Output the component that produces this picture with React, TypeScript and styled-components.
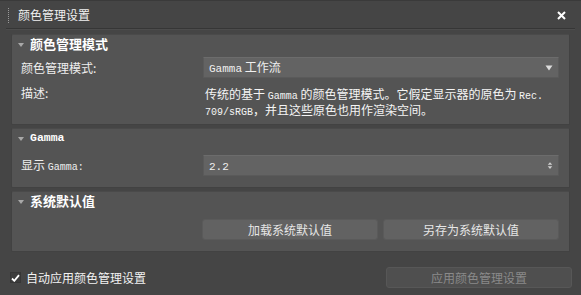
import React from 'react';
import styled, { createGlobalStyle } from 'styled-components';

const GlobalStyle = createGlobalStyle`
  html, body {
    margin: 0;
    padding: 0;
    background: #454545;
  }
  body {
    font-family: "Noto Sans CJK SC", "Liberation Sans", sans-serif;
    font-size: 12px;
    color: #f2f2f2;
  }
`;

const Window = styled.div`
  width: 581px;
  height: 295px;
  box-sizing: border-box;
  display: flex;
  flex-direction: column;
  background: #454545;
  border-top: 1px solid #3a3a3a;
  overflow: hidden;
`;

const TitleBar = styled.div`
  height: 27px;
  margin: 0 6px 0 6px;
  display: flex;
  align-items: center;
  border-bottom: 1px solid #363636;
  box-shadow: 0 1px 0 #4c4c4c;
`;

const Grip = styled.div`
  width: 0;
  height: 15px;
  margin: 1px 9px 0 2px;
  border-left: 1px dotted #9a9a9a;
`;

const Title = styled.div`
  flex: 1;
  font-size: 12px;
  line-height: 14px;
  color: #f0f0f0;
`;

const Close = styled.svg`
  width: 9px;
  height: 9px;
  margin: 1px 9px 0 0;
`;

const Content = styled.div`
  display: flex;
  flex-direction: column;
  gap: 3px;
  padding: 5px 11px 0 11px;
`;

const Panel = styled.section<{ $height: number }>`
  height: ${p => p.$height}px;
  box-sizing: border-box;
  background: #545454;
  border: 1px solid #424242;
  border-top-color: #4a4a4a;
  border-radius: 2px;
`;

const PanelHeader = styled.div`
  height: 18px;
  display: flex;
  align-items: center;
  padding-left: 6px;
  gap: 6px;
`;

const Caret = styled.span`
  width: 0;
  height: 0;
  border-left: 3.5px solid transparent;
  border-right: 3.5px solid transparent;
  border-top: 4px solid #a8a8a8;
  margin-top: 1px;
`;

const HeaderText = styled.span<{ $latin?: boolean }>`
  font-weight: 700;
  font-size: ${p => (p.$latin ? '11.5px' : '13px')};
  font-family: ${p =>
    p.$latin ? '"Liberation Mono", monospace' : '"Noto Sans CJK SC", sans-serif'};
  color: #ffffff;
  line-height: 14px;
`;

const Grid = styled.div<{ $top: number }>`
  display: grid;
  grid-template-columns: 182px 1fr;
  column-gap: 0;
  row-gap: 8px;
  padding: ${p => p.$top}px 10px 0 9px;
  align-items: center;
`;

const Label = styled.div<{ $alignTop?: boolean }>`
  font-size: 12px;
  line-height: 13px;
  color: #efefef;
  align-self: ${p => (p.$alignTop ? 'start' : 'center')};
`;

const Latin = styled.span<{ $size?: number }>`
  font-family: "Liberation Mono", "DejaVu Sans Mono", monospace;
  font-size: ${p => p.$size ?? 10}px;
`;

const Select = styled.div`
  height: 21px;
  box-sizing: border-box;
  display: flex;
  align-items: center;
  justify-content: space-between;
  padding: 0 5px 0 5px;
  background: #636363;
  border: 1px solid #5a5a5a;
  border-top-color: #6c6c6c;
  border-radius: 1px;
  color: #f0f0f0;
`;

const SelectText = styled.span`
  font-size: 12px;
  line-height: 13px;
`;

const Arrow = styled.svg<{ $w: number; $h: number }>`
  width: ${p => p.$w}px;
  height: ${p => p.$h}px;
`;

const Description = styled.div`
  padding-left: 2px;
  font-size: 12px;
  line-height: 13px;
  color: #f4f4f4;
  margin-top: 1px;
`;

const ButtonRow = styled.div`
  grid-column: 2;
  display: grid;
  grid-template-columns: 1fr 1fr;
  gap: 5px;
  margin-left: -1px;
`;

const Button = styled.button<{ $disabled?: boolean }>`
  height: 21px;
  box-sizing: border-box;
  padding: 0;
  background: ${p => (p.$disabled ? '#4f4f4f' : '#626262')};
  border: 1px solid ${p => (p.$disabled ? '#575757' : '#5a5a5a')};
  border-radius: 3px;
  color: ${p => (p.$disabled ? '#8a8a8a' : '#e6e6e6')};
  font-family: "Noto Sans CJK SC", sans-serif;
  font-size: 12px;
  line-height: 13px;
`;

const Footer = styled.div`
  display: flex;
  align-items: center;
  justify-content: space-between;
  padding: 0 9px 0 10px;
  margin-top: 15px;
`;

const CheckLabel = styled.label`
  display: flex;
  align-items: center;
  gap: 5px;
  font-size: 12px;
  line-height: 13px;
  color: #f2f2f2;
`;

const CheckBox = styled.span`
  width: 11px;
  height: 11px;
  box-sizing: border-box;
  background: #3c3c3c;
  border: 1px solid #363636;
  display: flex;
  align-items: center;
  justify-content: center;
`;

const ApplyButton = styled(Button)`
  width: 186px;
`;

export default function App() {
  return (
    <>
      <GlobalStyle />
      <Window>
        <TitleBar>
          <Grip />
          <Title>颜色管理设置</Title>
          <Close viewBox="0 0 9 9">
            <path d="M1 1 L8 8 M8 1 L1 8" stroke="#ffffff" strokeWidth="2" />
          </Close>
        </TitleBar>
        <Content>
          <Panel $height={91}>
            <PanelHeader>
              <Caret />
              <HeaderText>颜色管理模式</HeaderText>
            </PanelHeader>
            <Grid $top={4}>
              <Label>颜色管理模式:</Label>
              <Select>
                <SelectText>
                  <Latin $size={11}>Gamma</Latin> 工作流
                </SelectText>
                <Arrow $w={8} $h={6} viewBox="0 0 8 6">
                  <path d="M0.5 0.5 H7.5 L4 5.5 Z" fill="#dcdcdc" />
                </Arrow>
              </Select>
              <Label $alignTop>描述:</Label>
              <Description>
                传统的基于 <Latin>Gamma</Latin> 的颜色管理模式。它假定显示器的原色为 <Latin>Rec.</Latin>
                <br />
                <Latin>709/sRGB</Latin>，并且这些原色也用作渲染空间。
              </Description>
            </Grid>
          </Panel>
          <Panel $height={60}>
            <PanelHeader>
              <Caret />
              <HeaderText $latin>Gamma</HeaderText>
            </PanelHeader>
            <Grid $top={8}>
              <Label>
                显示 <Latin>Gamma:</Latin>
              </Label>
              <Select>
                <SelectText>
                  <Latin $size={11}>2.2</Latin>
                </SelectText>
                <Arrow $w={6} $h={9} viewBox="0 0 8 10">
                  <path d="M1 4 H7 L4 0.5 Z M1 6 H7 L4 9.5 Z" fill="#cfcfcf" />
                </Arrow>
              </Select>
            </Grid>
          </Panel>
          <Panel $height={61}>
            <PanelHeader>
              <Caret />
              <HeaderText>系统默认值</HeaderText>
            </PanelHeader>
            <Grid $top={9}>
              <ButtonRow>
                <Button>加载系统默认值</Button>
                <Button>另存为系统默认值</Button>
              </ButtonRow>
            </Grid>
          </Panel>
        </Content>
        <Footer>
          <CheckLabel>
            <CheckBox>
              <svg width="9" height="8" viewBox="0 0 9 8">
                <path d="M1 4.5 L3.3 6.8 L8 1.2" stroke="#ffffff" strokeWidth="1.8" fill="none" />
              </svg>
            </CheckBox>
            自动应用颜色管理设置
          </CheckLabel>
          <ApplyButton $disabled>应用颜色管理设置</ApplyButton>
        </Footer>
      </Window>
    </>
  );
}
